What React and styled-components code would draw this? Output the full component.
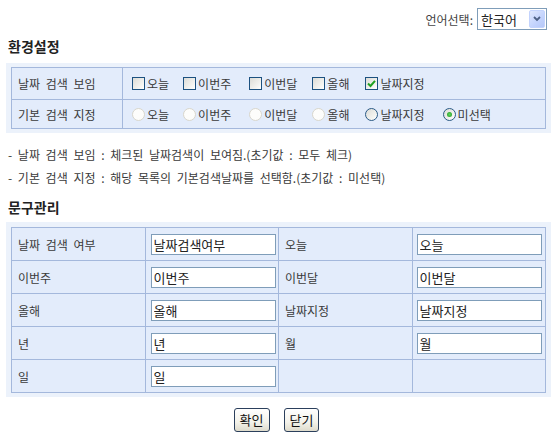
import React from "react";
import styled, { createGlobalStyle, css } from "styled-components";

const Global = createGlobalStyle`
  html, body { margin: 0; padding: 0; background: #fff; }
  body {
    font-family: "Noto Sans CJK KR", "Noto Sans", sans-serif;
    font-size: 12px;
    color: #3a3a3a;
    word-spacing: 3px;
  }
`;

const Page = styled.div`
  width: 553px;
  height: 436px;
  display: flex;
  flex-direction: column;
  box-sizing: border-box;
`;

const TopBar = styled.div`
  margin-top: 8px;
  height: 22px;
  display: flex;
  align-items: center;
  justify-content: flex-end;
  gap: 4px;
  padding-right: 6px;
`;

const LangLabel = styled.span`
  font-size: 12px;
  color: #444;
`;

const Select = styled.div`
  width: 70px;
  height: 22px;
  box-sizing: border-box;
  border: 1px solid #7f9db9;
  background: #fff;
  display: flex;
  align-items: center;
  justify-content: space-between;
  padding: 1px 1px 1px 3px;
  font-size: 13px;
  color: #222;
`;

const SelectArrow = styled.span`
  width: 16px;
  height: 18px;
  box-sizing: border-box;
  border: 1px solid #c3d3fd;
  border-radius: 2px;
  background: linear-gradient(135deg, #e0e9fe 0%, #c3d3fd 60%, #b6c8f8 100%);
  display: flex;
  align-items: center;
  justify-content: center;
`;

const Heading = styled.h2`
  margin: ${p => p.$mt}px 0 0 8px;
  height: 20px;
  line-height: 20px;
  font-size: 14px;
  font-weight: 700;
  color: #222;
`;

const Band = styled.div`
  margin: ${p => p.$mt}px 2px 0 6px;
  padding: ${p => p.$pad};
  background: #ecf2fb;
`;

const Table = styled.table`
  width: 100%;
  border-collapse: collapse;
  table-layout: fixed;
  background: #e3ecfb;
`;

const Cell = styled.td`
  border: 1px solid #a4b8dc;
  height: ${p => p.$h}px;
  box-sizing: border-box;
  padding: 0 ${p => (p.$pl != null ? p.$pl : 6)}px;
  vertical-align: middle;
  font-size: 12px;
  color: #3a3a3a;
  white-space: nowrap;
`;

const Options = styled.div`
  display: flex;
  align-items: center;
`;

const Item = styled.label`
  display: inline-flex;
  align-items: center;
  gap: 2px;
  margin-right: ${p => p.$mr}px;
  font-size: 12px;
  color: #3a3a3a;
`;

const Box = styled.span`
  width: 13px;
  height: 13px;
  box-sizing: border-box;
  border: 1px solid #1c5180;
  background: linear-gradient(135deg, #dcdcd7 0%, #f4f4f1 70%, #ffffff 100%);
  display: inline-flex;
  align-items: center;
  justify-content: center;
`;

const Radio = styled.span`
  width: 13px;
  height: 13px;
  box-sizing: border-box;
  border-radius: 50%;
  display: inline-flex;
  align-items: center;
  justify-content: center;
  ${p =>
    p.$disabled
      ? css`
          border: 1px solid #d8d6cc;
          background: #fdfdfb;
        `
      : css`
          border: 1px solid #2a5a86;
          background: linear-gradient(135deg, #dcdcd7 0%, #f4f4f1 70%, #ffffff 100%);
        `}
`;

const Dot = styled.span`
  width: 5px;
  height: 5px;
  border-radius: 50%;
  background: radial-gradient(circle, #5fd35f 0%, #1f9a1f 100%);
`;

const Notes = styled.div`
  margin: 10px 0 0 8px;
  display: flex;
  flex-direction: column;
`;

const Note = styled.div`
  height: 23px;
  line-height: 23px;
  font-size: 12px;
  color: #3a3a3a;
`;

const TextInput = styled.input`
  width: 125px;
  height: 21px;
  box-sizing: border-box;
  border: 1px solid #7f9db9;
  background: #fff;
  padding: 0 2px;
  font-family: "Noto Sans CJK KR", "Noto Sans", sans-serif;
  font-size: 13px;
  color: #222;
  outline: none;
  display: block;
`;

const Buttons = styled.div`
  margin-top: 11px;
  display: flex;
  justify-content: center;
  gap: 14px;
`;

const Button = styled.button`
  height: 24px;
  padding: 0 5px;
  box-sizing: border-box;
  border: 1px solid #2b3f5c;
  border-radius: 3px;
  background: linear-gradient(180deg, #ffffff 0%, #f3f2ea 60%, #dedbcc 100%);
  font-family: "Noto Sans CJK KR", "Noto Sans", sans-serif;
  font-size: 13px;
  color: #111;
  line-height: 20px;
`;

const Check = () => (
  <svg width="9" height="9" viewBox="0 0 9 9">
    <path d="M1 4.5 L3.5 7 L8 1.8" fill="none" stroke="#21a121" strokeWidth="2" />
  </svg>
);

const Chevron = () => (
  <svg width="8" height="6" viewBox="0 0 8 6">
    <path d="M1 1 L4 4 L7 1" fill="none" stroke="#4d6185" strokeWidth="1.8" />
  </svg>
);

const showItems = [
  { label: "오늘", mr: 14 },
  { label: "이번주", mr: 18 },
  { label: "이번달", mr: 15 },
  { label: "올해", mr: 16 },
  { label: "날짜지정", mr: 18, checked: true },
];

const defaultItems = [
  { label: "오늘", mr: 14, disabled: true },
  { label: "이번주", mr: 18, disabled: true },
  { label: "이번달", mr: 15, disabled: true },
  { label: "올해", mr: 16, disabled: true },
  { label: "날짜지정", mr: 18 },
  { label: "미선택", mr: 0, checked: true },
];

const phraseRows = [
  ["날짜 검색 여부", "날짜검색여부", "오늘", "오늘"],
  ["이번주", "이번주", "이번달", "이번달"],
  ["올해", "올해", "날짜지정", "날짜지정"],
  ["년", "년", "월", "월"],
  ["일", "일", null, null],
];

export default function App() {
  return (
    <Page>
      <Global />
      <TopBar>
        <LangLabel>언어선택:</LangLabel>
        <Select>
          <span>한국어</span>
          <SelectArrow>
            <Chevron />
          </SelectArrow>
        </Select>
      </TopBar>

      <Heading $mt={6}>환경설정</Heading>
      <Band $mt={7} $pad="4px 5px">
        <Table>
          <colgroup>
            <col style={{ width: "111px" }} />
            <col />
          </colgroup>
          <tbody>
            <tr>
              <Cell $h={32}>날짜 검색 보임</Cell>
              <Cell $h={32} $pl={9}>
                <Options>
                  {showItems.map(it => (
                    <Item key={it.label} $mr={it.mr}>
                      <Box>{it.checked && <Check />}</Box>
                      {it.label}
                    </Item>
                  ))}
                </Options>
              </Cell>
            </tr>
            <tr>
              <Cell $h={29}>기본 검색 지정</Cell>
              <Cell $h={29} $pl={9}>
                <Options>
                  {defaultItems.map(it => (
                    <Item key={it.label} $mr={it.mr}>
                      <Radio $disabled={it.disabled}>{it.checked && <Dot />}</Radio>
                      {it.label}
                    </Item>
                  ))}
                </Options>
              </Cell>
            </tr>
          </tbody>
        </Table>
      </Band>

      <Notes>
        <Note>- 날짜 검색 보임 : 체크된 날짜검색이 보여짐.(초기값 : 모두 체크)</Note>
        <Note>- 기본 검색 지정 : 해당 목록의 기본검색날짜를 선택함.(초기값 : 미선택)</Note>
      </Notes>

      <Heading $mt={8}>문구관리</Heading>
      <Band $mt={5} $pad="5px 5px 4px">
        <Table>
          <tbody>
            {phraseRows.map((row, i) => (
              <tr key={i}>
                <Cell $h={33}>{row[0]}</Cell>
                <Cell $h={33} $pl={5}>
                  <TextInput defaultValue={row[1]} />
                </Cell>
                <Cell $h={33}>{row[2]}</Cell>
                <Cell $h={33} $pl={4}>
                  {row[3] != null && <TextInput defaultValue={row[3]} />}
                </Cell>
              </tr>
            ))}
          </tbody>
        </Table>
      </Band>

      <Buttons>
        <Button>확인</Button>
        <Button>닫기</Button>
      </Buttons>
    </Page>
  );
}
